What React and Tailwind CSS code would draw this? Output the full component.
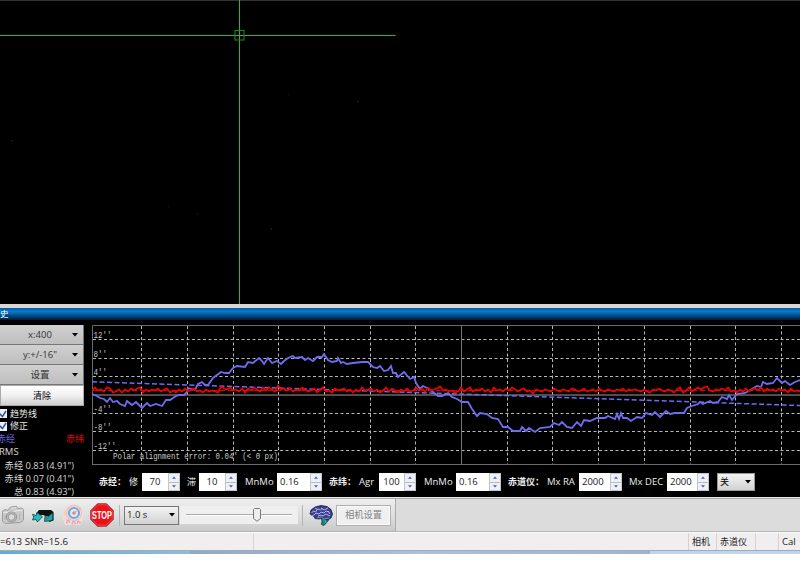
import React, { useState } from 'react';

const GRID_X = [49.5, 95.5, 141, 186.5, 232.5, 278, 323.5, 415, 460.5, 506.5, 552, 598, 643.5, 689.5];
const GRID_Y = [14.5, 33, 51.5, 88, 106.5, 125];

const Y_LABELS = [
  { text: "12''", y: 12 },
  { text: "8''", y: 31 },
  { text: "4''", y: 49 },
  { text: "-4''", y: 86 },
  { text: "-8''", y: 104.5 },
  { text: "-12''", y: 123 },
];

const RA_POINTS =
  '0,69 5,71 8,73 12,74 15,77 18,73 21,77 25,76 28,79 33,81 35,76 40,80 44,77 47,80 50,83 55,78 58,81 64,79 70,81 74,75 78,75 84,71 ' +
  '88,70 92,70 95,67 96,63 100,64 103,65 106,59 110,57 113,60 116,60 121,53 125,50 129,47 133,48 137,48 141,43 145,41 153,42 156,37 161,38 ' +
  '167,33 170,36 172,39 176,33 180,38 185,36 189,39 192,36 196,33 201,31 203,33 210,32 213,35 216,33 221,36 225,32 230,32 232,29 236,35 ' +
  '240,37 245,36 246,33 249,38 251,37 255,39 261,38 270,37 276,37 281,42 285,43 288,41 292,46 296,45 299,41 301,48 304,48 306,52 312,47 ' +
  '318,54 322,52 324,58 328,64 331,61 335,63 341,67 346,71 350,71 356,68 360,72 365,74 370,77 376,77 380,84 385,91 388,88 395,89 400,93 ' +
  '406,94 411,102 416,102 421,106 428,106 430,102 434,106 437,103 443,107 448,103 458,102 462,98 467,100 470,97 475,102 480,103 485,97 ' +
  '489,101 492,95 498,96 505,93 513,93 516,91 523,94 525,89 527,94 529,88 531,93 535,93 539,96 545,92 550,93 554,88 560,90 563,87 568,92 ' +
  '574,86 578,89 583,88 592,88 595,83 600,81 606,79 608,77 611,79 618,76 621,78 626,77 630,72 635,74 637,70 640,75 645,69 653,68 660,64 ' +
  '665,61 669,62 671,57 675,59 681,58 685,53 690,58 693,56 698,60 703,57 708,55';

// vertical position of the declination trace, one sample every 3px
const DEC_SAMPLES = [
  65, 62, 65, 64, 66, 62, 63, 67, 66, 64, 67, 64, 66, 63, 65, 63, 62, 67, 64, 66, 64, 65, 63, 66, 64, 63,
  67, 65, 67, 64, 66, 63, 66, 64, 63, 66, 65, 67, 64, 66, 65, 66, 67, 61, 63, 64, 62, 65, 64, 66, 63, 67, 63, 65,
  62, 64, 66, 62, 65, 62, 64, 66, 60, 64, 63, 65, 63, 66, 64, 65, 62, 64, 66, 65, 63, 67, 64, 62, 66, 65, 67, 63,
  65, 64, 63, 66, 64, 67, 64, 66, 62, 65, 64, 63, 66, 64, 67, 65, 62, 66, 63, 65, 67, 64, 66, 63, 66, 65, 62, 65,
  63, 66, 62, 65, 64, 63, 61, 65, 64, 66, 65, 67, 66, 62, 66, 64, 62, 66, 64, 65, 63, 66, 64, 67, 62, 65, 64, 66,
  63, 65, 62, 64, 66, 64, 63, 66, 65, 68, 64, 65, 66, 64, 65, 66, 63, 65, 66, 64, 65, 66, 63, 64, 66, 65, 63, 66,
  65, 64, 66, 63, 65, 66, 64, 65, 66, 64, 65, 63, 66, 64, 65, 64, 65, 66, 64, 66, 67, 64, 65, 63, 65, 66, 64, 65,
  67, 64, 62, 67, 65, 62, 66, 64, 62, 64, 62, 61, 65, 66, 64, 65, 63, 65, 62, 66, 65, 67, 64, 66, 63, 66, 64, 63,
  65, 62, 66, 63, 65, 64, 66, 63, 65, 64, 67, 63, 66, 65, 66,
];
const DEC_POINTS = DEC_SAMPLES.map((y, i) => `${i * 3},${y + 0.5}`).join(' ');

const Arrow = ({ className = '' }) => (
  <svg viewBox="0 0 6 4" className={`h-1 w-1.5 shrink-0 ${className}`}>
    <path d="M0 0h6L3 3.6z" fill="currentColor" />
  </svg>
);

const MenuButton = ({ children }) => (
  <button className="flex h-5 w-[84px] items-center border-r border-b border-[#777] bg-gradient-to-b from-[#d0d0d0] to-[#bebebe] pr-[5px] pl-2 text-[9.5px] text-[#333]">
    <span className="flex-1 text-center">{children}</span>
    <Arrow className="text-black" />
  </button>
);

const Check = ({ label }) => {
  const [checked, setChecked] = useState(true);

  return (
    <label className="flex h-[12.5px] items-center gap-[3px] text-[#e4e4e4]">
      <input type="checkbox" className="sr-only" checked={checked} onChange={() => setChecked(!checked)} />
      <span className="flex h-[9px] w-[7px] items-center justify-end bg-[#eef1f6]">
        {checked && (
          <svg viewBox="0 0 7 8" className="h-2 w-[7px]" fill="none" stroke="#2f49a0" strokeWidth="1.4">
            <path d="M0 3.8 2.4 6.6 6 1" />
          </svg>
        )}
      </span>
      {label}
    </label>
  );
};

const Spinner = ({ value, className, align = 'text-center' }) => (
  <div className={`flex h-[18px] shrink-0 bg-white text-[9.5px] text-[#222] ${className}`}>
    <span className={`flex-1 leading-[17px] ${align}`}>{value}</span>
    <span className="flex w-3 flex-col border border-[#c3c6cc] bg-[#eef0f3] text-[#4a5da0]">
      <span className="flex flex-1 items-center justify-center border-b border-[#b8bcc4]">
        <Arrow className="h-[3px]! w-1! rotate-180" />
      </span>
      <span className="flex flex-1 items-center justify-center">
        <Arrow className="h-[3px]! w-1!" />
      </span>
    </span>
  </div>
);

const CameraIcon = () => (
  <svg viewBox="0 0 24 20" className="h-5 w-6" stroke="#969696" strokeWidth="0.9">
    <path d="M1.500 6 4 4.500l3 .8L9.500 2l6-.7L17 3.500l4-.5 1.500 2v10l-3 2.500L4 18.500 1.500 16z" fill="#c9c9c9" />
    <path d="M2.500 7.500 8 7l14-2M10.500 3.200l4.500-.5" fill="none" stroke="#efefef" />
    <circle cx="10.500" cy="12" r="5.200" fill="#b7b7b7" />
    <circle cx="10.500" cy="12" r="3.300" fill="#dadada" />
    <path d="M18.500 9v6M4 10v5" stroke="#b0b0b0" />
  </svg>
);

const LoopIcon = () => (
  <svg viewBox="0 0 22 16" className="h-4 w-[22px]">
    <path d="M4 6.500 7 3h12l2.500 2v8.500L17 15V9.500h-2.500L11 8H5z" fill="#071315" />
    <path d="M.5 7.500h1.500L4 9l1-3.500 5.500 4.200L5.500 15 4 12.500.5 13l1.200-3z" fill="#22bfc0" stroke="#063335" strokeWidth="0.7" />
    <path d="M20.800 6v7l-3.300 1-5 .4.500-5 2.200 1.800 3-3.500z" fill="#1ba6a6" stroke="#063335" strokeWidth="0.7" />
  </svg>
);

const TargetIcon = () => (
  <svg viewBox="0 0 22 24" className="h-6 w-[22px]" fill="none">
    <path d="M3 5 9 1l8 1 4 5v8l-2 7H3l-2-6z" fill="#f1dedc" />
    <circle cx="12" cy="10" r="7.400" fill="#f5e9e9" stroke="#e8bfc2" strokeWidth="1.200" />
    <circle cx="12" cy="10" r="5" fill="#dfeaf5" stroke="#76a5d4" strokeWidth="2.200" />
    <circle cx="12" cy="10" r="1.800" fill="#df858a" />
    <path d="m12 10 6.500-5" stroke="#d5b16c" />
    <path d="M5 21v-3l1.500-1L8 20M10 21.500l1-3 2 .5v2.500M15 21l1-3 2 1v2" stroke="#dba3b2" strokeWidth="1.200" />
    <path d="M3 8v5M5 5v3M3 15l2 2" stroke="#efcdb6" strokeWidth="1.500" />
  </svg>
);

const StopIcon = () => (
  <svg viewBox="0 0 24 24" className="h-6 w-6 overflow-visible">
    <path d="M7.500.7h9l6.800 6.800v9l-6.800 6.800h-9L.7 16.500v-9z" fill="#ec1018" stroke="#7c3030" strokeWidth="0.8" />
    <path d="M7.900 1.800h8.200l6.100 6.100v8.200l-6.100 6.100H7.900l-6.100-6.100V7.900z" fill="none" stroke="#ff7474" strokeWidth="0.500" />
    <text x="2" y="16" textLength="20" lengthAdjust="spacingAndGlyphs" fill="#fff" className="font-['Liberation_Sans_Narrow','Liberation_Sans',sans-serif] text-[11px] font-bold">STOP</text>
  </svg>
);

const BrainIcon = () => (
  <svg viewBox="0 0 24 21" className="h-[21px] w-6" fill="none">
    <path d="M12 12h9l-2 4-4 4.500-2.500-1 .5-3.500z" fill="#267f83" stroke="#123d46" strokeWidth="0.800" />
    <path d="m1 9 1-4 4-3 6-1.500 6 1 4 3L23.500 9 22 13l-4 2-4-2-4 1-4-.5-1-2z" fill="#3c3f8c" stroke="#171b43" strokeWidth="0.800" />
    <path d="m2.500 8 2-2 2 1 2-3 3 1 2-2M5 10l2-2 3 1 2-2 3 1 2-2 3 1M12 3l3 2 4-2M6 3l2 1M9 11l3-1 2 1 3-2 4 2M19 6l2 3M3 11l2-1" stroke="#b4b2ee" strokeWidth="1" />
    <path d="m8 13 4-1 3 2 5-1M16 15l1 3" stroke="#58b7ac" strokeWidth="0.900" />
  </svg>
);

const Chart = () => (
  <svg viewBox="0 0 708 142" className="mt-[5px] h-[142px] w-[708px] shrink-0" fill="none">
    <path d="M0.500 140V0.500H708M0.500 139.500H708" stroke="#6a6a6a" />
    <g stroke="#b8b8b8" strokeDasharray="3 2.500">
      {GRID_X.map((x) => (
        <path key={x} d={`M${Math.floor(x) + 0.5} 1V139`} />
      ))}
      {GRID_Y.map((y) => (
        <path key={y} d={`M1 ${Math.floor(y) + 0.5}H708`} />
      ))}
    </g>
    <path d="M1 70H708" stroke="#686868" strokeWidth="1.300" />
    <path d="M369.500 1V139" stroke="#747474" />
    <g fill="#c8c8c8" className="font-['Liberation_Mono'] text-[9px]">
      {Y_LABELS.map(({ text, y }) => (
        <text key={text} x="1.500" y={y + 0.5} textLength={text.length * 4.5} lengthAdjust="spacingAndGlyphs">{text}</text>
      ))}
      <text x="21" y="134" textLength="165" lengthAdjust="spacingAndGlyphs">Polar alignment error: 0.04' (&lt; 0 px)</text>
    </g>
    <path d="M0 56.800 708 80.500" stroke="#6f6cf0" strokeWidth="1.500" strokeDasharray="5 2.500" />
    <polyline points={RA_POINTS} stroke="#6f6cf0" strokeWidth="1.800" />
    <path d="M0 65.500H708" stroke="#e00000" strokeDasharray="5 3" />
    <polyline points={DEC_POINTS} stroke="#f40000" strokeWidth="1.700" />
  </svg>
);

const GuideControls = () => (
  <div className="flex h-[31px] items-center pt-px pl-[99px] text-[9.5px] whitespace-nowrap text-[#ededed]">
    <b className="w-[30px] shrink-0 text-[9px]">赤经：</b>
    <span className="w-[13px] shrink-0 text-[9px]">修</span>
    <Spinner value="70" className="w-[38px]" />
    <span className="ml-[7px] w-3 shrink-0 text-[9px]">滞</span>
    <Spinner value="10" className="w-[38px]" />
    <span className="ml-2 w-8 shrink-0">MnMo</span>
    <Spinner value="0.16" className="w-[45px]" align="pl-[3px]" />
    <b className="ml-[7px] w-[30px] shrink-0 text-[9px]">赤纬：</b>
    <span className="w-5 shrink-0">Agr</span>
    <Spinner value="100" className="w-[37px]" />
    <span className="ml-2 w-8 shrink-0">MnMo</span>
    <Spinner value="0.16" className="w-[45px]" align="pl-[3px]" />
    <b className="ml-[7px] w-[39px] shrink-0 text-[9px]">赤道仪：</b>
    <span className="w-8 shrink-0">Mx RA</span>
    <Spinner value="2000" className="w-[43px]" align="pl-[3px]" />
    <span className="ml-[7px] w-[38px] shrink-0">Mx DEC</span>
    <Spinner value="2000" className="w-[42px]" align="pl-[3px]" />
    <button className="ml-2 flex h-[18px] w-[38px] items-center justify-between border border-[#999] bg-gradient-to-b from-[#f4f4f4] to-[#d2d2d2] pr-[3px] pl-[2px] text-[9px] text-black">
      关 <Arrow />
    </button>
  </div>
);

const HistoryPanel = () => (
  <section className="h-[177px] bg-black">
    <div className="flex h-[146px]">
      <aside className="w-[92px] shrink-0 pt-[5px] leading-3 whitespace-nowrap text-[#d8d8d8]">
        <div className="flex flex-col">
          <MenuButton>x:400</MenuButton>
          <MenuButton>y:+/-16"</MenuButton>
          <MenuButton>设置</MenuButton>
          <button className="h-[21px] w-[84px] border border-[#aaa] bg-gradient-to-b from-white via-[#f1f1f1] to-[#cfcfcf] leading-[18px] text-black">清除</button>
        </div>
        <div className="mt-[1.5px]">
          <Check label="趋势线" />
          <Check label="修正" />
        </div>
        <div className="flex h-[13px] w-[84px] items-center justify-between">
          <span className="-ml-[3px] text-[#6b68e6]">赤经</span>
          <span className="text-[#f00000]">赤纬</span>
        </div>
        <div className="-ml-px h-[13px] text-[9.5px]">RMS</div>
        <div className="w-[74px] text-right text-[9.3px] leading-[13.3px]">
          <div>赤经 0.83 (4.91")</div>
          <div>赤纬 0.07 (0.41")</div>
          <div>总 0.83 (4.93")</div>
        </div>
      </aside>
      <Chart />
    </div>
    <GuideControls />
  </section>
);

const Toolbar = () => (
  <div className="flex h-[33px] border-t border-[#aaa] bg-[#dcdcdc]">
    <div className="flex w-[396px] items-center border-r border-[#aaa] bg-gradient-to-b from-[#eee] via-[#dfdfdf] to-[#c9c9c9] pl-px">
      <CameraIcon />
      <div className="ml-[7px]"><LoopIcon /></div>
      <div className="ml-[8px]"><TargetIcon /></div>
      <div className="ml-[6px]"><StopIcon /></div>
      <div className="ml-[5px] h-[21px] w-px shrink-0 bg-[#b5b5b5]" />
      <button className="ml-[4px] flex h-[19px] w-[55px] shrink-0 items-center justify-between border border-[#777] bg-gradient-to-b from-[#f3f3f3] to-[#d2d2d2] pr-[3px] pl-[2px] text-[9.5px] text-[#222]">
        1.0 s <Arrow className="text-black" />
      </button>
      <div className="ml-px flex h-[18px] w-[118px] shrink-0 items-center bg-[#efefef] px-1.5">
        <span className="h-0.5 w-[67px] border-t border-[#aaa] bg-white" />
        <svg viewBox="0 0 8 14" className="h-3.5 w-2 shrink-0">
          <path d="M.5 1.500 1.500.500h5l1 1v9L4 13.300.500 10.500z" fill="#eee" stroke="#777" />
        </svg>
        <span className="h-0.5 flex-1 border-t border-[#aaa] bg-white" />
      </div>
      <div className="ml-1 h-[21px] w-px shrink-0 bg-[#b5b5b5]" />
      <div className="ml-[6px] shrink-0"><BrainIcon /></div>
      <button className="ml-[3px] h-[21px] w-[55px] shrink-0 border border-[#b0b0b0] bg-[#f0f0f0] text-[9.3px] text-[#858585] shadow-[inset_0_0_0_1px_#fafafa]">相机设置</button>
    </div>
  </div>
);

const StatusBar = () => (
  <footer className="flex h-[19px] items-stretch border-t border-b border-t-[#fafafa] border-b-[#aaa] bg-[#f0eeee] leading-[17px] whitespace-nowrap text-[#222]">
    <span className="w-[254px] border-r border-[#d8d6d6] text-[9.7px]">=613 SNR=15.6</span>
    <span className="w-[435px] border-r border-[#d4d2d2]" />
    <span className="w-7 border-r border-[#d4d2d2] pl-[3px]">相机</span>
    <span className="w-[39px] border-r border-[#d4d2d2] pl-[3px]">赤道仪</span>
    <span className="w-[23px] border-r border-[#d4d2d2]" />
    <span className="flex-1 pl-[3px] text-[9.5px]">Cal</span>
  </footer>
);

const App = () => (
  <div className="h-[566px] w-[800px] overflow-hidden bg-white font-['Open_Sans','Noto_Sans_CJK_SC',sans-serif] text-[9px]">
    <svg viewBox="0 0 800 304" className="block h-[304px] w-[800px] bg-black" fill="none">
      <path d="M0 .5H800" stroke="#333" />
      <path d="M0 35.500H395.500M239.500 0V304" stroke="#2cb82c" />
      <rect x="235" y="30.500" width="9" height="9.500" stroke="#208c20" />
      <g fill="#202020">
        <rect x="11" y="140" width="2" height="1" />
        <rect x="288" y="94" width="1" height="1" />
        <rect x="357" y="101" width="2" height="1" />
        <rect x="197" y="213" width="1" height="1" />
        <rect x="168" y="206" width="1" height="1" />
        <rect x="271" y="228" width="1" height="2" />
      </g>
    </svg>
    <div className="h-1 bg-[#d9d7d4]" />
    <header className="h-3 bg-gradient-to-b from-[#075a9d] via-[#087bd0] via-30% to-[#001d3b] leading-3 text-white">
      <span className="text-[8.5px]">史</span>
    </header>
    <HistoryPanel />
    <div className="h-px bg-[#e8e8e8]" />
    <Toolbar />
    <div className="h-px bg-[#b5b5b5]" />
    <StatusBar />
    <div className="flex h-[3px]">
      <div className="w-[190px] bg-gradient-to-r from-[#62add2] to-[#8dbbe0]" />
      <div className="flex-1 bg-gradient-to-r from-[#8fa9cd] via-[#a9c0e0] to-[#9cb4d4]" />
      <div className="w-[150px] bg-[#bcd5f2]" />
    </div>
  </div>
);

export default App;
